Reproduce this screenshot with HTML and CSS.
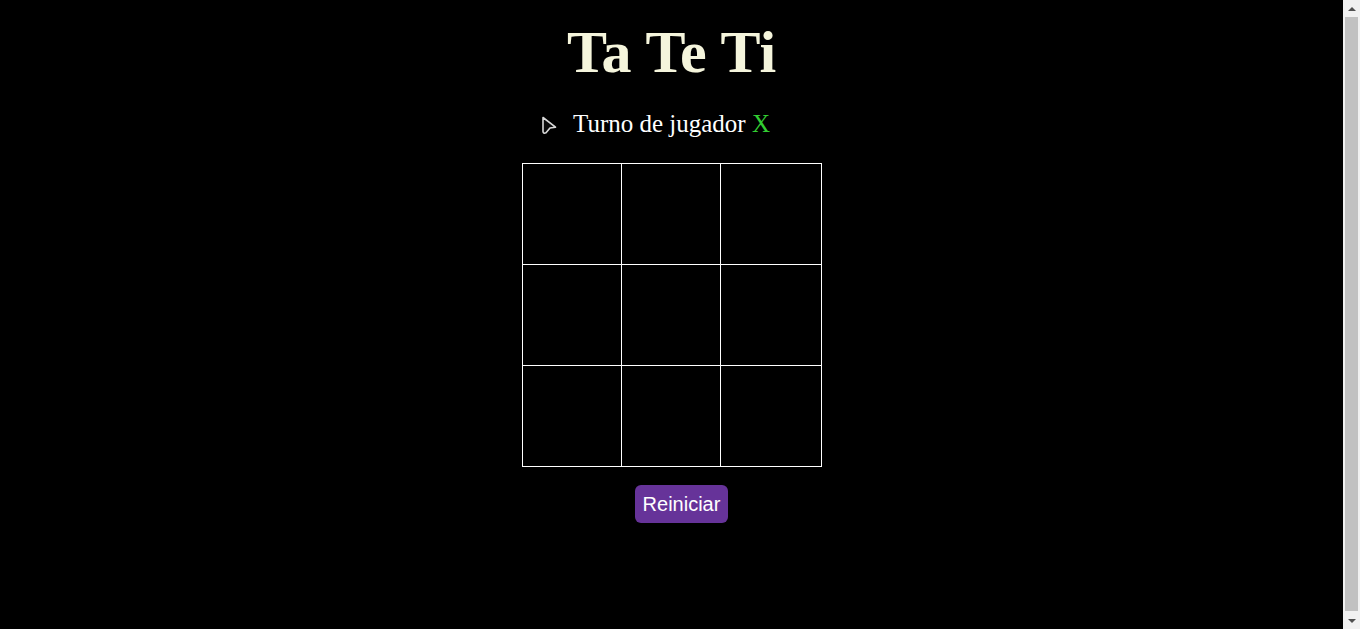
FILE: index.html
```html
<!DOCTYPE html>
<html lang="es">
<head>
<meta charset="utf-8">
<title>Ta Te Ti</title>
<link rel="stylesheet" href="styles.css">
</head>
<body>
<main class="game">
  <h1 class="title">Ta Te Ti</h1>
  <p class="turn"><span class="turn-text"><svg class="turn-icon" width="16" height="19" viewBox="0 0 16 19"><path d="M2 1.5 L14.5 11.2 L9 12 L5 16.8 Q2.2 18 2 15.5 Z" fill="#0a0a0a" stroke="#d8d8d8" stroke-width="1.6" stroke-linejoin="round"/></svg>Turno de jugador <span class="player">X</span></span></p>
  <div class="board">
    <div class="cell"></div><div class="cell"></div><div class="cell"></div>
    <div class="cell"></div><div class="cell"></div><div class="cell"></div>
    <div class="cell"></div><div class="cell"></div><div class="cell"></div>
  </div>
  <button class="reset">Reiniciar</button>
</main>
<div class="scrollbar" aria-hidden="true">
  <div class="sb-btn"><span class="sb-arrow sb-up"></span></div>
  <div class="sb-thumb"></div>
  <div class="sb-btn"><span class="sb-arrow sb-down"></span></div>
</div>
</body>
</html>
```

FILE: styles.css
```css
html {
  background: #000;
}
body {
  margin: 8px 25px 8px 8px;
  min-height: 100vh;
  background: #000;
  color: #fff;
  font-family: "Liberation Serif", "Times New Roman", serif;
}
.game {
  display: flex;
  flex-direction: column;
  align-items: center;
}
.title {
  margin: 13px 0 0;
  font-size: 60px;
  font-weight: bold;
  line-height: 62px;
  color: #f5f5dc;
}
.turn {
  margin: 26px 0 0;
  font-size: 25px;
  line-height: 30px;
}
.turn-text {
  position: relative;
}
.turn-icon {
  position: absolute;
  left: -32px;
  top: 6px;
}
.player {
  color: #32cd32;
}
.board {
  margin-top: 24px;
  display: grid;
  grid-template-columns: 99px 99px 101px;
  grid-template-rows: 101px 101px 101px;
  border-left: 1px solid #fff;
  border-top: 1px solid #fff;
}
.cell {
  border-right: 1px solid #fff;
  border-bottom: 1px solid #fff;
}
.reset {
  margin: 18px 0 0 20px;
  padding: 7px 8px;
  border: none;
  border-radius: 6px;
  background: #663399;
  color: #fff;
  font-family: "Liberation Sans", Arial, sans-serif;
  font-size: 20px;
  line-height: 24px;
}
.scrollbar {
  position: fixed;
  top: 0;
  right: 0;
  width: 17px;
  height: 100vh;
  background: #f1f1f1;
  display: flex;
  flex-direction: column;
}
.sb-btn {
  height: 17px;
  display: flex;
  align-items: center;
  justify-content: center;
}
.sb-arrow {
  width: 0;
  height: 0;
  border-left: 4px solid transparent;
  border-right: 4px solid transparent;
}
.sb-up {
  border-bottom: 4px solid #505050;
}
.sb-down {
  border-top: 4px solid #505050;
}
.sb-thumb {
  flex: 1;
  margin: 0 2px 1px;
  background: #c1c1c1;
}
```
